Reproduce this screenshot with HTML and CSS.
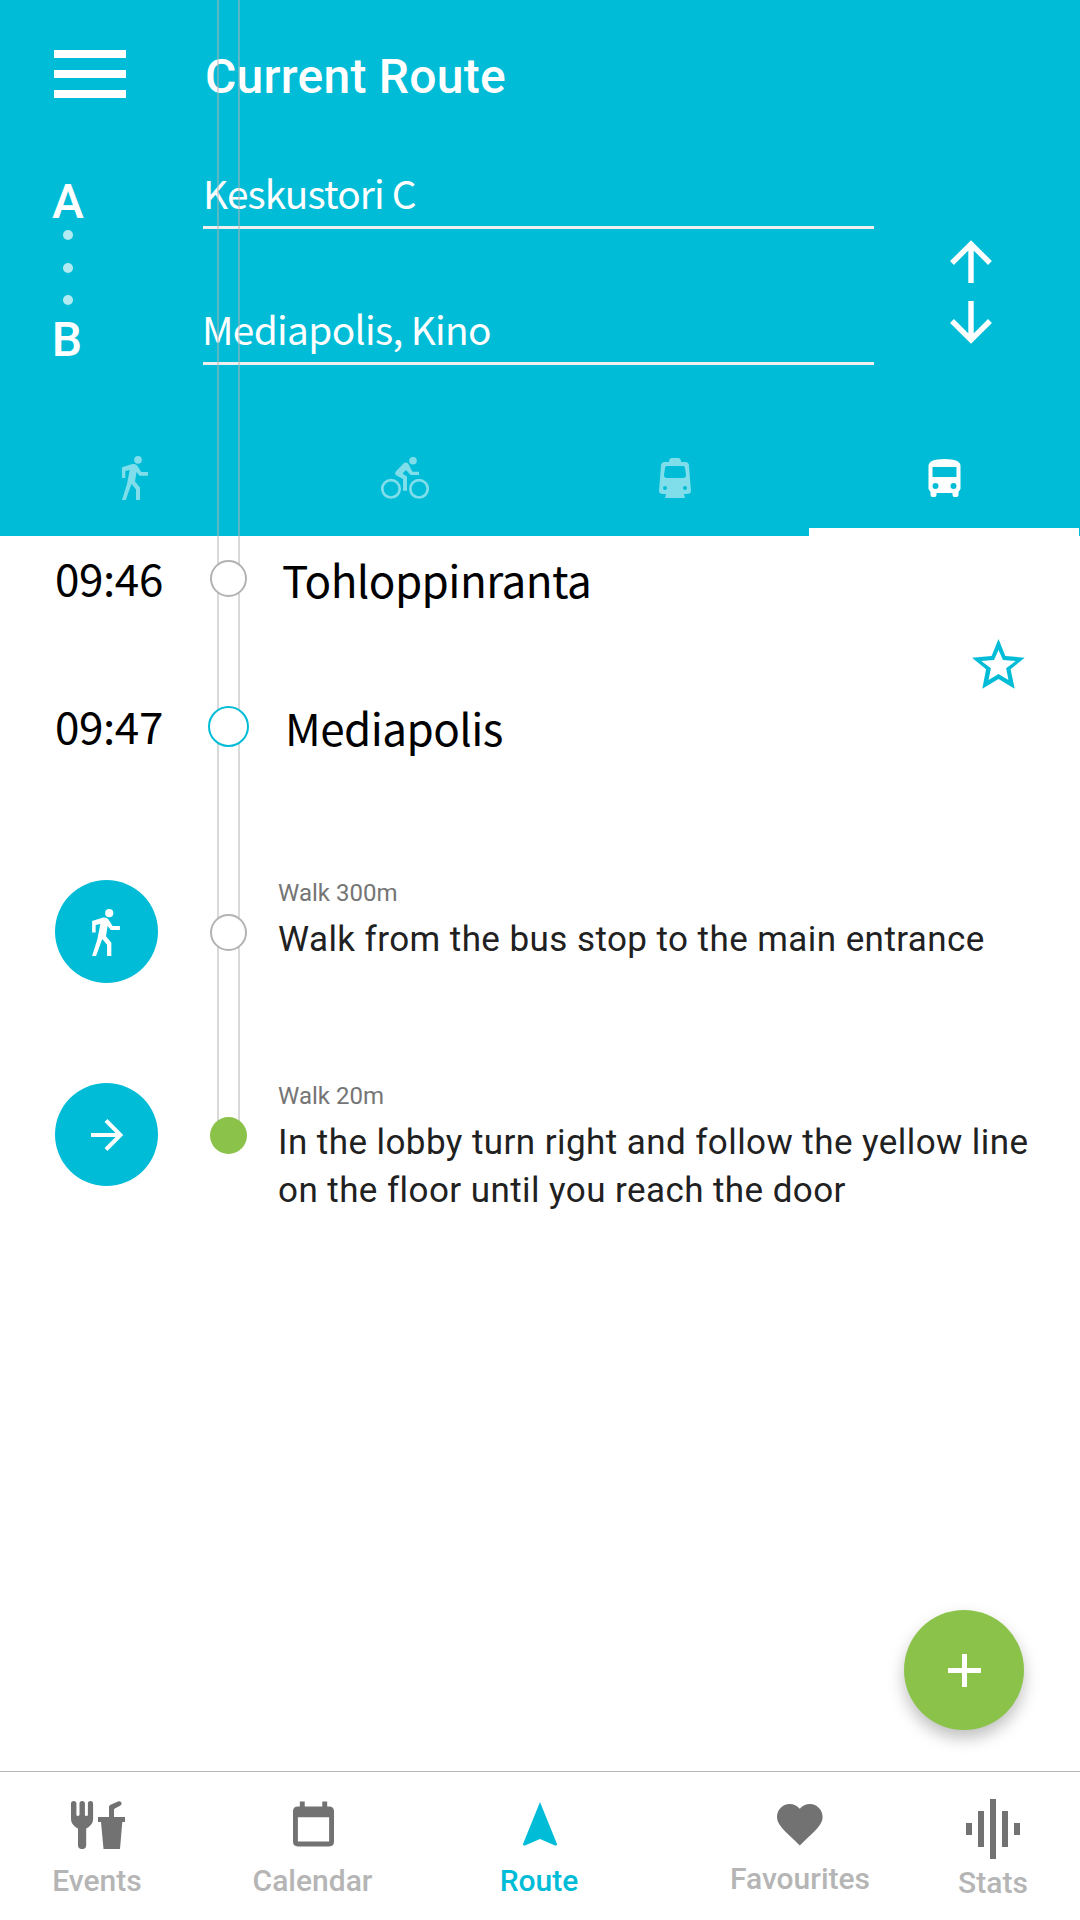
FILE: index.html
```
<!DOCTYPE html>
<html lang="en">
<head>
<meta charset="utf-8">
<title>Current Route</title>
<link rel="stylesheet" href="styles.css">
</head>
<body>
<div class="screen">
  <header class="header">
    <div class="title-bar">
      <svg class="menu" viewBox="0 0 72 48"><path d="M0 0h72v8H0zM0 20h72v8H0zM0 40h72v8H0z" fill="#fff"/></svg>
      <h1 class="title">Current Route</h1>
    </div>
    <div class="search">
      <div class="ends">
        <span class="end">A</span>
        <span class="dot"></span><span class="dot"></span><span class="dot"></span>
        <span class="end end-b">B</span>
      </div>
      <div class="fields">
        <div class="field">Keskustori C</div>
        <div class="field field-to">Mediapolis, Kino</div>
      </div>
      <svg class="swap" viewBox="0 0 44 106" fill="none" stroke="#fff" stroke-width="5.4"><path d="M22 44V5M3 24L22 5l19 19M22 62v39M3 82l19 19 19-19"/></svg>
    </div>
    <nav class="modes">
      <div class="mode"><svg class="walk-small" viewBox="0 0 26 44"><use href="#walker"/></svg></div>
      <div class="mode"><svg width="48" height="42" viewBox="0 0 48 42"><g fill="none" stroke="currentColor" stroke-width="2.700"><circle cx="10" cy="31.800" r="8.700"/><circle cx="38" cy="31.800" r="8.700"/></g><circle cx="32" cy="3.800" r="3.800"/><path d="M22.500 6.500q2.500-2.200 4.800.3l4.200 7.900H38V18h-8.500L25 13l-3.500 3.500 4.500 3v14.300h-4V22l-6.500-3.500q-2.500-1.800-.5-4.300z"/></svg></div>
      <div class="mode mode-tram"><svg width="32" height="40" viewBox="0 0 32 40"><path fill-rule="evenodd" d="M10 4q0-4 3-4h6q3 0 3 4h4q4 0 4 4l2 25q0 3-4 3h-3l1 4H6l1-4H4q-4 0-4-3L2 8q0-4 4-4zM8 8q-2 0-2 2l-1 7q0 3 3 3h16q3 0 3-3l-1-7q0-2-2-2zM6 28a2 2 0 100 4 2 2 0 000-4m20 0a2 2 0 100 4 2 2 0 000-4"/></svg></div>
      <div class="mode mode-on"><svg width="33" height="38" viewBox="0 0 32 38"><path fill-rule="evenodd" d="M0 7q0-7 16-7t16 7v23l-2 3v3q0 2-2 2h-2q-2 0-2-2v-2H8v2q0 2-2 2H4q-2 0-2-2v-3l-2-3zm4 1v10h24V8zm3 16a3 3 0 100 6 3 3 0 000-6m18 0a3 3 0 100 6 3 3 0 000-6"/></svg></div>
    </nav>
  </header>

  <main class="route">
    <div class="stop">
      <span class="time">09:46</span><span class="node"></span><span class="place">Tohloppinranta</span>
    </div>
    <svg class="star" viewBox="0 0 53 50"><path fill-rule="evenodd" d="M26.500 0l6.900 17 19.300 1.700-14.100 11.600 4.100 19.400L26.500 40l-16.200 9.700 3.800-19.400L0 18.700 19.600 17zm0 11L22 21 9.300 22l9.600 7.300L16.500 41l10-6 10 6-2.400-11.700 9.600-7.300L31 21z"/></svg>
    <div class="stop stop-here">
      <span class="time">09:47</span><span class="node node-here"></span><span class="place">Mediapolis</span>
    </div>
    <div class="step step-first">
      <span class="badge"><svg class="walk" viewBox="0 0 26 44"><use href="#walker"/></svg></span>
      <span class="node"></span>
      <div class="info"><div class="distance">Walk 300m</div><div class="direction">Walk from the bus stop to the main entrance</div></div>
    </div>
    <div class="step">
      <span class="badge"><svg width="32" height="32" viewBox="0 0 32 32" fill="none" stroke="#fff" stroke-width="4"><path d="M0 16h29M15 1.500L29.500 16 15 30.500"/></svg></span>
      <span class="node node-end"></span>
      <div class="info"><div class="distance">Walk 20m</div><div class="direction">In the lobby turn right and follow the yellow line<br>on the floor until you reach the door</div></div>
    </div>
  </main>

  <button class="add" aria-label="Add"><svg width="33" height="33" viewBox="0 0 33 33"><path d="M14 0h5v14h14v5H19v14h-5V19H0v-5h14z" fill="#fff"/></svg></button>

  <nav class="tabs">
    <a class="tab tab-events"><svg viewBox="0 0 54 48"><path d="M0 2.700a2.700 2.700 0 015.400 0v11q0 1.300 1.600 1.300t1.500-1.300v-11a2.700 2.700 0 015.400 0v11q0 1.300 1.500 1.300t1.500-1.300v-11a2.600 2.700 0 015.200 0V18q0 6-6.900 9.500V44a4 4 0 01-8.200 0V27.500Q0 24 0 18zM27 16h11V6q0-1.500 1.500-2.300L47 .4c3-1.200 5 2.600 2.500 4L43 8v8h11v5h-2.700L49 48H32.500L30 21h-3z"/></svg><span>Events</span></a>
    <a class="tab tab-calendar"><svg viewBox="0 0 42 46"><path fill-rule="evenodd" d="M7 0h5v5h18V0h5v5h2q5 0 5 5v31q0 5-5 5H5q-5 0-5-5V10q0-5 5-5h2zM5 16v25h32V16z"/></svg><span>Calendar</span></a>
    <a class="tab tab-route"><svg viewBox="0 0 34 44"><path d="M17 0L34 42q-.3 2-2 1.600L17 37 2 43.600Q.3 44 0 42z"/></svg><span>Route</span></a>
    <a class="tab tab-favourites"><svg viewBox="0 0 46 42"><path d="M22.800 41.500l-3.300-3.300C8 27 0 21 0 13 0 6 5.500 0 12.600 0c4 0 7.700 1.800 10.200 4.800C25.200 1.800 29 0 33 0c7 0 12.600 6 12.600 13 0 8-8 14-19.500 25.200z"/></svg><span>Favourites</span></a>
    <a class="tab tab-stats"><svg viewBox="0 0 54 60"><path d="M0 24h6v12H0zM12 12h6v36h-6zM24 0h6v60h-6zM36 12h6v36h-6zM48 24h6v12h-6z"/></svg><span>Stats</span></a>
  </nav>
  <div class="track"></div>
</div>
<svg class="symbols"><symbol id="walker" viewBox="0 0 26 44"><circle cx="16" cy="3.900" r="3.800"/><path d="M0 11.300L10.500 8q3.500-.5 5 2l3.700 6H26v3.700h-8.500L14.500 16 13 25.500l5 6V44h-4V33.500L9.500 28 3.700 44H0L5 28l2.700-14-4.400 1v7H0z"/></symbol></svg>
</body>
</html>
```
FILE: styles.css
```
* { box-sizing: border-box; }
body { margin: 0; background: #fff; font-family: Roboto, sans-serif; }
svg { display: block; flex: none; }
svg:not([fill]) { fill: currentColor; }
.symbols { position: absolute; width: 0; height: 0; }
.screen { position: relative; width: 1080px; height: 1920px; display: flex; flex-direction: column; overflow: hidden; }

.header { height: 536px; background: #00bcd7; color: #fff; display: flex; flex-direction: column; }
.title-bar { display: flex; gap: 79px; padding: 50px 0 0 54px; height: 160px; }
.menu { width: 72px; height: 48px; }
.title { margin: -1px 0 0; font-size: 48px; line-height: 56px; font-weight: 500; letter-spacing: .25px; white-space: nowrap; }
.search { display: flex; height: 284px; }
.ends { width: 203px; padding: 13px 135px 0 68px; display: flex; flex-direction: column; align-items: center; }
.end { font-size: 48px; line-height: 57px; font-weight: 500; width: 60px; margin: 0 -30px; text-align: center; }
.dot { width: 10px; height: 10px; margin-bottom: 22.500px; border-radius: 50%; background: #b2ebf2; }
.end-b { margin-top: -17px; padding-right: 2px; }
.fields { width: 671px; }
.field { height: 69px; border-bottom: 3px solid #f1eeee; font-family: "Noto Sans CJK SC", sans-serif; font-size: 38.800px; letter-spacing: -.85px; line-height: 64px; white-space: nowrap; }
.field-to { margin-top: 67px; letter-spacing: -.65px; text-indent: -1px; }
.swap { width: 44px; height: 106px; margin: 79px 0 0 75px; }

.modes { height: 92px; display: flex; }
.mode { width: 270px; display: flex; align-items: center; justify-content: center; padding-bottom: 24px; color: #80deeb; }
.mode-tram { width: 269px; }
.mode-on { color: #fff; border-bottom: 8px solid #fff; padding: 0 0 16px 1px; }
.walk-small { width: 26px; height: 44px; }
.walk { width: 28px; height: 47px; margin: 1px 2px 0 0; }

.route { height: 1235px; position: relative; z-index: 1; }
.stop { display: flex; align-items: center; height: 85px; font-family: "Noto Sans CJK SC", sans-serif; font-size: 44px; letter-spacing: -.55px; color: #000; white-space: nowrap; }
.time { width: 155px; margin-left: 55px; padding-bottom: 4px; letter-spacing: -.4px; }
.node { flex: none; width: 37px; height: 37px; border: 2px solid #b3b3b3; border-radius: 50%; background: #fff; }
.place { margin-left: 35px; padding-top: 1px; }
.star { width: 53px; height: 50px; margin: 18px 0 0 971.500px; color: #00bcd7; }
.stop-here { height: 75px; }
.node-here { width: 41px; height: 41px; margin: 0 -2px; border-color: #00bcd7; }
.node-here + .place { margin-left: 38px; }
.step { display: flex; height: 203px; padding-left: 55px; }
.step-first { margin-top: 116px; }
.badge { flex: none; width: 103px; height: 103px; border-radius: 50%; background: #00bcd7; color: #fff; display: flex; align-items: center; justify-content: center; }
.step .node { margin: 34px 0 0 52px; }
.node-end { border: 0; background: #8bc34a; }
.info { margin-left: 31px; white-space: nowrap; }
.distance { font-size: 24px; line-height: 27px; color: #757575; }
.direction { margin-top: 9px; font-size: 35px; line-height: 48px; letter-spacing: .43px; color: #212121; }

.tabs { height: 149px; border-top: 1px solid #b5b5b5; display: flex; color: #b5b5b5; font-size: 30px; font-weight: 500; line-height: 34px; }
.tab { width: 216px; display: flex; flex-direction: column; align-items: center; }
.tab svg { color: #727272; }
.tab-events { width: 194px; }
.tab-events svg { width: 54px; height: 48px; margin: 29px 0 15px 1px; }
.tab-calendar { width: 237px; }
.tab-calendar svg { width: 41px; height: 46px; margin: 29px 0 17px 2px; }
.tab-route { color: #00bcd7; }
.tab-route svg { color: #00bcd7; width: 34px; height: 44px; margin: 30px 0 18px 2px; }
.tab-favourites { width: 306px; }
.tab-favourites svg { width: 46px; height: 42px; margin: 32px 0 16px; }
.tab-stats { width: 80px; }
.tab-stats svg { width: 54px; height: 60px; margin: 27px 0 7px; }

.add { position: absolute; z-index: 2; left: 904px; top: 1610px; width: 120px; height: 120px; padding: 0; border: 0; border-radius: 50%; background: #8bc34a; display: flex; align-items: center; justify-content: center; box-shadow: 0 8px 16px rgba(0,0,0,.25); }
.track { position: absolute; left: 217px; top: 0; width: 23px; height: 1125px; border: solid rgba(179,179,179,.5); border-width: 0 2px; }
```
